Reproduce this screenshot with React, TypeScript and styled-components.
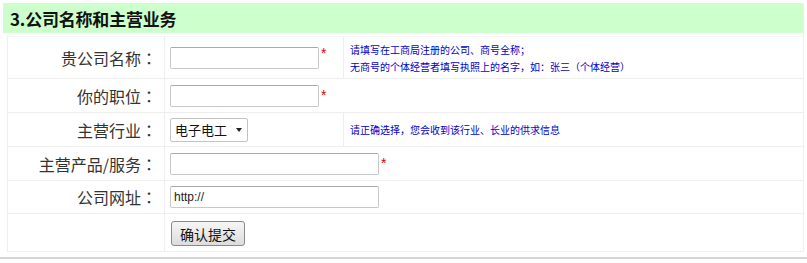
import React from "react";
import styled, { createGlobalStyle } from "styled-components";

const Global = createGlobalStyle`
  html, body { margin: 0; padding: 0; background: #fff; }
  body { font-family: "Noto Sans CJK SC", "Noto Sans", sans-serif; }
`;

const Page = styled.div`
  width: 807px;
  height: 263px;
  box-sizing: border-box;
  padding: 3px 4px 0 3px;
  position: relative;
`;

const Panel = styled.section`
  border-right: 1px solid #eeeeee;
  width: 800px;
`;

const Header = styled.h3`
  margin: 0;
  height: 30px;
  background: #ccffcc;
  display: flex;
  align-items: center;
  padding-left: 7px;
  font-size: 17px;
  font-weight: bold;
  color: #111;
  font-family: "Noto Sans CJK SC", sans-serif;
  letter-spacing: -0.2px;
`;

const Table = styled.div`
  margin: 3px 0 0 4px;
  display: grid;
  grid-template-columns: 157px 179px 1fr;
  grid-auto-rows: auto;
  border-left: 1px solid #efefef;
  border-top: 1px solid #f6f6f6;
  width: 795px;
`;

const Label = styled.div<{ $h: number }>`
  height: ${(p) => p.$h}px;
  box-sizing: border-box;
  border-right: 1px solid #eeeeee;
  border-bottom: 1px solid #eeeeee;
  display: flex;
  align-items: center;
  justify-content: flex-end;
  padding-right: 7px;
  font-size: 16px;
  color: #333;
`;

const Colon = styled.span`
  font-family: "Noto Sans CJK TC", sans-serif;
  display: inline-block;
  width: 16px;
  text-align: center;
`;

const Field = styled.div<{ $span?: boolean }>`
  grid-column: ${(p) => (p.$span ? "2 / 4" : "auto")};
  box-sizing: border-box;
  border-bottom: 1px solid #eeeeee;
  border-right: ${(p) => (p.$span ? "none" : "1px solid #eeeeee")};
  display: flex;
  align-items: center;
  padding-left: 5px;
`;

const Hint = styled.div`
  box-sizing: border-box;
  border-bottom: 1px solid #eeeeee;
  display: flex;
  flex-direction: column;
  justify-content: center;
  padding-left: 6px;
  font-size: 10px;
  line-height: 17px;
  color: #0000cc;
`;

const Input = styled.input<{ $w: number }>`
  width: ${(p) => p.$w}px;
  height: 22px;
  box-sizing: border-box;
  border: 1px solid #c8c8c8;
  border-top-color: #a9a9a9;
  border-radius: 2px;
  padding: 0 3px;
  font-family: "Liberation Sans", Arial, sans-serif;
  font-size: 12px;
  color: #222;
  outline: none;
`;

const Star = styled.span`
  color: #e00000;
  font-size: 14px;
  align-self: flex-start;
  margin-left: 2px;
  margin-top: 9px;
  line-height: 14px;
  font-family: "Liberation Sans", sans-serif;
`;

const SelectBox = styled.div`
  width: 78px;
  height: 24px;
  box-sizing: border-box;
  border: 1px solid #c4c4c4;
  border-radius: 2px;
  display: flex;
  align-items: center;
  justify-content: space-between;
  padding: 0 5px 0 4px;
  font-size: 13px;
  color: #111;
  background: #fff;
`;

const Caret = styled.span`
  width: 0;
  height: 0;
  border-left: 3.5px solid transparent;
  border-right: 3.5px solid transparent;
  border-top: 4px solid #222;
`;

const Button = styled.button`
  width: 74px;
  height: 25px;
  margin-top: 2px;
  margin-left: 1px;
  border: 1px solid #8a8a8a;
  border-radius: 3px;
  background: linear-gradient(#f6f6f6, #dcdcdc);
  font-family: "Noto Sans CJK SC", sans-serif;
  font-size: 14px;
  color: #111;
  padding: 0;
`;

const BottomLine = styled.div`
  position: absolute;
  left: 0;
  right: 0;
  top: 257px;
  height: 2px;
  background: #d4d4d4;
`;

function LabelText({ text }: { text: string }) {
  return (
    <>
      {text}
      <Colon>：</Colon>
    </>
  );
}

export default function App() {
  return (
    <Page>
      <Global />
      <Panel>
        <Header>3.公司名称和主营业务</Header>
        <Table>
          <Label $h={42}>
            <LabelText text="贵公司名称" />
          </Label>
          <Field>
            <Input $w={149} />
            <Star>*</Star>
          </Field>
          <Hint>
            <span>请填写在工商局注册的公司、商号全称；</span>
            <span>无商号的个体经营者填写执照上的名字，如：张三（个体经营）</span>
          </Hint>

          <Label $h={34}>
            <LabelText text="你的职位" />
          </Label>
          <Field $span>
            <Input $w={149} />
            <Star>*</Star>
          </Field>

          <Label $h={34}>
            <LabelText text="主营行业" />
          </Label>
          <Field>
            <SelectBox>
              <span>电子电工</span>
              <Caret />
            </SelectBox>
          </Field>
          <Hint>请正确选择，您会收到该行业、长业的供求信息</Hint>

          <Label $h={34}>
            <LabelText text="主营产品/服务" />
          </Label>
          <Field $span>
            <Input $w={209} />
            <Star>*</Star>
          </Field>

          <Label $h={33}>
            <LabelText text="公司网址" />
          </Label>
          <Field $span>
            <Input $w={209} defaultValue="http://" />
          </Field>

          <Label $h={38}></Label>
          <Field $span>
            <Button>确认提交</Button>
          </Field>
        </Table>
      </Panel>
      <BottomLine />
    </Page>
  );
}
